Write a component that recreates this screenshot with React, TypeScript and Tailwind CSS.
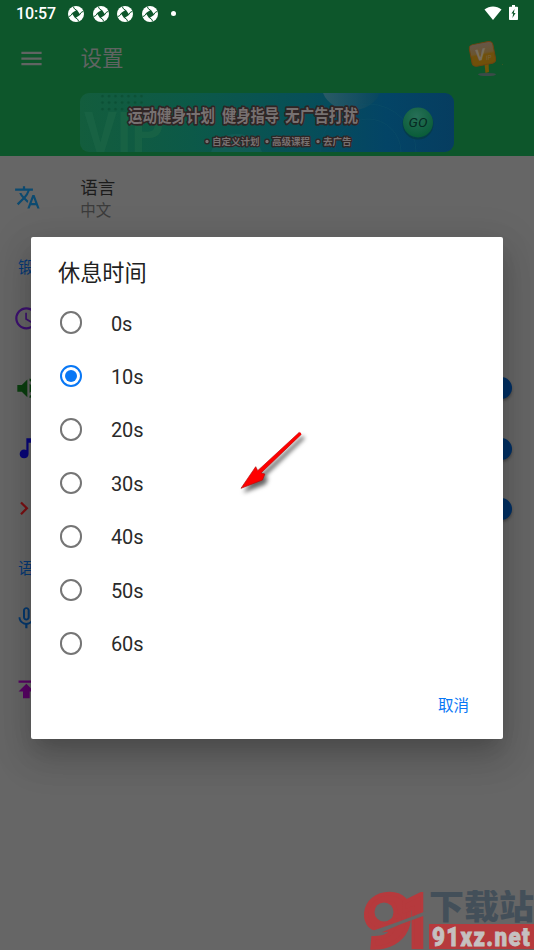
import type { ReactNode } from "react";
import {
  MdAccessTime,
  MdLastPage,
  MdMenu,
  MdMicNone,
  MdMusicNote,
  MdPublish,
  MdTranslate,
  MdVolumeUp,
} from "react-icons/md";

const restOptions = ["0s", "10s", "20s", "30s", "40s", "50s", "60s"];
const selectedOption = "10s";

function ShutterIcon() {
  return (
    <svg viewBox="0 0 16 16" className="size-4">
      <circle cx="8" cy="8" r="8" fill="#fff" />
      <path d="M8.800 3.700 12.300 8.800 7.200 12.300 3.700 7.200Z" fill="#0d562b" />
      <path
        d="M8.500 4.200Q6.200 3.500 5.200.5M11.800 8.500Q12.500 6.200 15.500 5.200M7.500 11.800Q9.800 12.500 10.800 15.500M4.200 7.500Q3.500 9.800.5 10.800"
        fill="none"
        stroke="#0d562b"
        strokeWidth="1"
      />
    </svg>
  );
}

function StatusBar() {
  return (
    <div className="flex h-7 items-center pr-[15px] pl-[16px] text-white">
      <span className="w-[52px] text-[16px] font-medium tracking-[-0.1px]">10:57</span>
      <div className="mb-px flex gap-[8.5px]">
        <ShutterIcon />
        <ShutterIcon />
        <ShutterIcon />
        <ShutterIcon />
      </div>
      <span className="mb-px ml-[13px] size-[5px] rounded-full bg-white" />
      <svg viewBox="0 0 18 14" className="mb-[2px] ml-auto h-[14px] w-[18px]">
        <path d="M0.500 3.500C5.500-.6 12.500-.6 17.500 3.500L9 14Z" fill="#fff" />
      </svg>
      <svg viewBox="0 0 9 15" className="mr-px mb-[3px] ml-[7px] h-[15px] w-[9px]">
        <path d="M3 0h3v1.700h2.200q.8 0 .8.800v11.700q0 .8-.8.800H.8q-.8 0-.8-.8V2.500q0-.8.8-.8H3Z" fill="#fff" />
        <path d="M5.600 4 2.400 8.600h1.800L3.400 13 6.600 8H4.800Z" fill="#0d562b" />
      </svg>
    </div>
  );
}

function VipSign() {
  return (
    <svg viewBox="0 0 40 40" className="size-10">
      <defs>
        <linearGradient id="sign" x1="0" y1="0" x2="0" y2="1">
          <stop offset="0" stopColor="#66564a" />
          <stop offset=".45" stopColor="#6b5530" />
          <stop offset=".55" stopColor="#70500c" />
          <stop offset="1" stopColor="#705009" />
        </linearGradient>
      </defs>
      <ellipse cx="20" cy="36.500" rx="9" ry="1.600" fill="#3b4b49" />
      <path d="M17.500 26 21.500 25 22 34 18.500 35Z" fill="#715508" />
      <g transform="rotate(-11 15 16)">
        <rect x="3.500" y="5" width="24" height="22" rx="4" fill="url(#sign)" stroke="#6e4310" />
        <text x="8" y="22" fontSize="16" fontStyle="italic" fontWeight="700" fill="#776d5d">
          V
        </text>
        <text x="18" y="23" fontSize="6.500" fontStyle="italic" fill="#776342">
          IP
        </text>
      </g>
      <circle cx="35.500" cy="26.500" r=".6" fill="#3c5b23" />
    </svg>
  );
}

function Banner() {
  return (
    <svg viewBox="0 0 374 59" className="h-[59px] w-[374px] rounded-[9px]">
      <defs>
        <linearGradient id="banner">
          <stop offset="0" stopColor="#135d3d" />
          <stop offset=".3" stopColor="#0c5948" />
          <stop offset=".6" stopColor="#074f58" />
          <stop offset=".82" stopColor="#034466" />
          <stop offset="1" stopColor="#063d60" />
        </linearGradient>
        <linearGradient id="moon">
          <stop offset="0" stopColor="#3d626b" />
          <stop offset="1" stopColor="#09475d" />
        </linearGradient>
        <radialGradient id="go" cx=".45" cy=".3" r=".75">
          <stop offset="0" stopColor="#276f57" />
          <stop offset="1" stopColor="#075b36" />
        </radialGradient>
        <pattern id="dots" width="6.500" height="6.500" patternUnits="userSpaceOnUse">
          <circle cx="3" cy="3" r="1.400" fill="#0b5035" />
        </pattern>
      </defs>
      <rect width="374" height="59" fill="url(#banner)" />
      <rect x="18" width="48" height="20" fill="url(#dots)" />
      <text
        x="4"
        y="58.500"
        fontSize="55"
        fontWeight="700"
        textLength="80"
        lengthAdjust="spacingAndGlyphs"
        fill="#1b6546"
        opacity=".75"
      >
        VIP
      </text>
      <path d="M131 59a27 27 0 0 1 51 0Z" fill="#17615a" opacity=".6" />
      <path d="M243 0a30 25 0 0 0 57 0Z" fill="url(#moon)" opacity=".65" />
      <g fill="none" stroke="#10536a" opacity=".4">
        <circle cx="288" cy="59" r="33" />
        <circle cx="288" cy="59" r="48" />
      </g>
      <g fill="#777171" stroke="#302525" strokeLinejoin="round" fontWeight="700">
        <g fontSize="17" strokeWidth="3.400" paintOrder="stroke">
          <text x="48" y="29" textLength="87" lengthAdjust="spacingAndGlyphs">运动健身计划</text>
          <text x="142" y="29" textLength="57" lengthAdjust="spacingAndGlyphs">健身指导</text>
          <text x="205" y="29" textLength="73" lengthAdjust="spacingAndGlyphs">无广告打扰</text>
        </g>
        <g fontSize="9.500" strokeWidth="2.600" paintOrder="stroke">
          <text x="132" y="52">自定义计划</text>
          <text x="192" y="52">高级课程</text>
          <text x="243" y="52">去广告</text>
        </g>
        <g strokeWidth="1.200">
          <circle cx="127" cy="48.500" r="2.300" />
          <circle cx="187" cy="48.500" r="2.300" />
          <circle cx="238" cy="48.500" r="2.300" />
        </g>
      </g>
      <circle cx="338" cy="31" r="15.500" fill="#053b40" opacity=".7" />
      <circle cx="338" cy="29.500" r="15" fill="url(#go)" />
      <text
        x="328.500"
        y="34"
        fontSize="12.500"
        fontStyle="italic"
        textLength="19"
        lengthAdjust="spacingAndGlyphs"
        fill="#062a22"
      >
        GO
      </text>
    </svg>
  );
}

type RowProps = {
  icon: ReactNode;
  className: string;
  toggle?: boolean;
};

function SettingRow({ icon, className, toggle }: RowProps) {
  return (
    <div className={`flex items-center justify-between pr-[22px] text-[26.700px] ${className}`}>
      {icon}
      {toggle && (
        <span className="size-[22px] rounded-full bg-[#023064] shadow-[0_2px_3px_rgba(0,0,0,0.3)]" />
      )}
    </div>
  );
}

function RestTimeDialog() {
  return (
    <div className="absolute top-[237px] left-[31px] h-[502px] w-[472px] rounded-[2px] bg-white shadow-[0_12px_18px_-7px_rgba(0,0,0,0.14),0_20px_36px_4px_rgba(0,0,0,0.12),0_8px_38px_8px_rgba(0,0,0,0.08)]">
      <h2 className="h-[59px] pt-[20px] pl-[27px] text-[22.200px] leading-[32px] text-[#212121]">休息时间</h2>
      <div>
        {restOptions.map((option) => (
          <div key={option} className="flex h-[53.450px] items-center pl-[28.700px]">
            <span
              className={`flex size-[22.500px] items-center justify-center rounded-full border-[2.200px] ${
                option === selectedOption ? "border-[#0877f5]" : "border-[#757575]"
              }`}
            >
              {option === selectedOption && <span className="size-[11.500px] rounded-full bg-[#0877f5]" />}
            </span>
            <span className="ml-[28.700px] pt-[1.700px] text-[20px] text-[#2a2a2a]">{option}</span>
          </div>
        ))}
      </div>
      <div className="mt-[24px] flex justify-end pr-[34px]">
        <button type="button" className="text-[15.500px] leading-[24px] text-[#0877f5]">
          取消
        </button>
      </div>
    </div>
  );
}

function Arrow() {
  return (
    <svg
      viewBox="0 0 80 76"
      className="absolute top-[424px] left-[232px] h-[76px] w-20 drop-shadow-[3px_4px_2px_rgba(0,0,0,0.6)]"
    >
      <path
        d="M67.200 8.400 69.200 10.400 29 49 32.800 50 30.500 56 9 64.300 23.700 42.700 25.700 46.700Z"
        fill="#fe0000"
        stroke="#b80b0b"
        strokeWidth=".7"
      />
      <path d="M68 9.600 26.500 48" stroke="#fe0000" strokeWidth="2.200" strokeLinecap="round" />
    </svg>
  );
}

function Watermark() {
  return (
    <svg viewBox="0 0 170 60" className="absolute right-0 bottom-0 h-[60px] w-[170px]">
      <g fill="#b63a3d" stroke="#b63a3d" strokeWidth="4" fontWeight="900">
        <text transform="translate(-4 57) skewX(-5)" fontSize="74" textLength="50" lengthAdjust="spacingAndGlyphs">
          9
        </text>
        <text x="36" y="57" fontSize="74" textLength="31" lengthAdjust="spacingAndGlyphs">
          1
        </text>
      </g>
      <circle cx="20" cy="22" r="9.500" fill="#666" />
      <path d="M8 41Q38 31 62 21V25Q38 33 16 43Z" fill="#666" />
      <text
        x="65"
        y="29"
        fontSize="34"
        fontWeight="900"
        textLength="105"
        lengthAdjust="spacingAndGlyphs"
        fill="#434f59"
      >
        下载站
      </text>
      <rect x="65" y="34" width="105" height="25" fill="#b63a3d" />
      <text
        x="68"
        y="55.500"
        fontSize="25"
        fontWeight="900"
        textLength="99"
        lengthAdjust="spacingAndGlyphs"
        className="tracking-[1.500px]"
        fill="#c5c0c0"
        stroke="#c5c0c0"
        strokeWidth=".8"
      >
        91xz.net
      </text>
    </svg>
  );
}

export default function App() {
  return (
    <div className="relative h-[950px] w-[534px] overflow-hidden bg-[#666] font-[Roboto,'Noto_Sans_CJK_SC',sans-serif]">
      <header className="h-[156px] bg-[#0d562b]">
        <StatusBar />
        <div className="flex h-[60px] items-center pl-[18px] text-[#606462]">
          <MdMenu className="text-[27px]" />
          <h1 className="mt-px ml-[35.500px] text-[21.500px] leading-none">设置</h1>
          <div className="mr-[27px] ml-auto">
            <VipSign />
          </div>
        </div>
        <div className="pt-[5px] pl-[80px]">
          <Banner />
        </div>
      </header>

      <main>
        <section className="flex h-[82px] items-center pl-[13.500px]">
          <MdTranslate className="text-[26.700px] text-[#0c4a70]" />
          <div className="ml-[40px] pt-[4px]">
            <p className="text-[17.500px] leading-[24px] text-[#1b1b1b]">语言</p>
            <p className="text-[15.500px] leading-[23px] text-[#3b3b3b]">中文</p>
          </div>
        </section>
        <p className="h-[50px] pt-[19px] pl-[18px] text-[15.500px] leading-[23px] text-[#063a76]">锻炼</p>
        <SettingRow className="h-[60px] pl-[13px] text-[#3d1170]" icon={<MdAccessTime />} />
        <SettingRow className="mt-[10px] h-[60px] pl-[14px] text-[#0b3f0f]" icon={<MdVolumeUp />} toggle />
        <SettingRow className="h-[61px] pl-[13px] text-[#09077a]" icon={<MdMusicNote />} toggle />
        <SettingRow className="h-[59px] pl-[14px] text-[#7c1013]" icon={<MdLastPage />} toggle />
        <p className="h-[50px] pt-[20px] pl-[18px] text-[15.500px] leading-[23px] text-[#063a76]">语音</p>
        <SettingRow className="h-[61px] pl-[13px] text-[#06396f]" icon={<MdMicNone />} />
        <SettingRow className="mt-[10px] h-[61px] pl-[13px] text-[#590566]" icon={<MdPublish />} />
      </main>

      <RestTimeDialog />
      <Arrow />
      <Watermark />
    </div>
  );
}
